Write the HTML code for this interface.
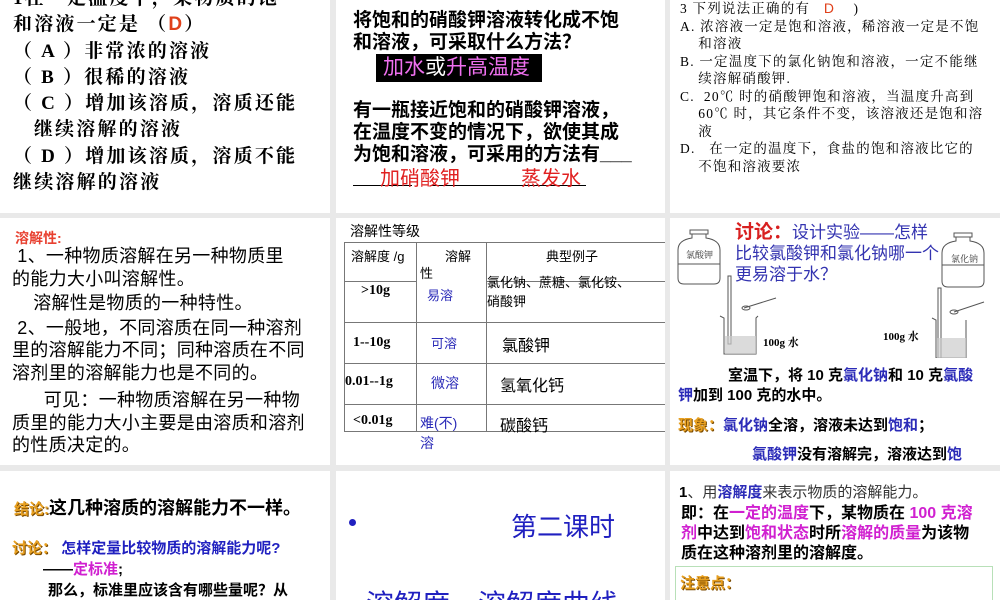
<!DOCTYPE html>
<html><head><meta charset="utf-8"><style>
*{margin:0;padding:0;box-sizing:border-box}
body{width:1000px;height:600px;background:#e9e9e9;position:relative;overflow:hidden;font-family:"Liberation Sans","Noto Sans CJK SC",sans-serif;color:#000}
.p{position:absolute;background:#fff;overflow:hidden}
.t{position:absolute;white-space:nowrap}
.serif{font-family:"Liberation Serif","Noto Serif CJK SC",serif}
.b{font-weight:bold}
.blue{color:#2b2bb8}
.org{color:#e8a020;font-weight:bold;text-shadow:1px 1px 0 #7a4a00}
.mag{color:#d020d0}
</style></head><body>

<!-- Panel 1 -->
<div class="p" style="left:0;top:0;width:330px;height:213px">
<div class="serif b" style="position:absolute;left:13px;top:-14px;font-size:19px;line-height:26.3px;letter-spacing:2.2px;white-space:nowrap">
<div>1在一定温度下，某物质的饱</div>
<div>和溶液一定是 （<span style="color:#e0401a;font-family:'Liberation Sans'">D</span>）</div>
<div>（ A ）非常浓的溶液</div>
<div>（ B ）很稀的溶液</div>
<div>（ C ）增加该溶质，溶质还能</div>
<div>&nbsp;&nbsp;&nbsp;继续溶解的溶液</div>
<div>（ D ）增加该溶质，溶质不能</div>
<div>继续溶解的溶液</div>
</div>
</div>

<!-- Panel 2 -->
<div class="p" style="left:336px;top:0;width:329px;height:213px">
<div class="b" style="position:absolute;left:17px;top:10px;font-size:19px;line-height:22px">
<div>将饱和的硝酸钾溶液转化成不饱</div>
<div>和溶液，可采取什么方法？</div>
</div>
<div style="position:absolute;left:40px;top:54px;width:166px;height:28px;background:#000"></div>
<div class="t" style="left:47px;top:55px;font-size:21px;line-height:26px;color:#f070f0">加水<span style="color:#fff">或</span>升高温度</div>
<div class="b" style="position:absolute;left:17px;top:100px;font-size:19px;line-height:22px">
<div>有一瓶接近饱和的硝酸钾溶液，</div>
<div>在温度不变的情况下，欲使其成</div>
<div>为饱和溶液，可采用的方法有___</div>
</div>
<div style="position:absolute;left:17px;top:185px;width:59px;border-top:1px solid #000"></div>
<div style="position:absolute;left:96px;top:185px;width:154px;border-top:1px solid #000"></div>
<div class="t" style="left:44px;top:162px;font-size:20px;color:#e02020">加硝酸钾</div>
<div class="t" style="left:185px;top:162px;font-size:20px;color:#e02020">蒸发水</div>
</div>

<!-- Panel 3 -->
<div class="p" style="left:670px;top:0;width:330px;height:213px">
<div class="serif" style="position:absolute;left:10px;top:0px;font-size:13.5px;line-height:17.5px;letter-spacing:1.2px;white-space:nowrap">
<div>3 下列说法正确的有 &nbsp;&nbsp;<span style="color:#e0401a;font-family:'Liberation Sans';font-size:14px">D</span> &nbsp;&nbsp;&nbsp;)</div>
<div>A. 浓溶液一定是饱和溶液，稀溶液一定是不饱</div>
<div>&nbsp;&nbsp;&nbsp;&nbsp;和溶液</div>
<div>B. 一定温度下的氯化钠饱和溶液，一定不能继</div>
<div>&nbsp;&nbsp;&nbsp;&nbsp;续溶解硝酸钾.</div>
<div>C. &nbsp;20℃ 时的硝酸钾饱和溶液，当温度升高到</div>
<div>&nbsp;&nbsp;&nbsp;&nbsp;60℃ 时，其它条件不变，该溶液还是饱和溶</div>
<div>&nbsp;&nbsp;&nbsp;&nbsp;液</div>
<div>D. &nbsp;&nbsp;在一定的温度下，食盐的饱和溶液比它的</div>
<div>&nbsp;&nbsp;&nbsp;&nbsp;不饱和溶液要浓</div>
</div>
</div>

<!-- Panel 4 -->
<div class="p" style="left:0;top:218px;width:330px;height:247px">
<div class="t b" style="left:15px;top:10px;font-size:14px;color:#e84030">溶解性:</div>
<div style="position:absolute;left:12px;top:27px;font-size:18px;line-height:22.5px;letter-spacing:0.3px;white-space:nowrap">
<div>&nbsp;1、一种物质溶解在另一种物质里</div>
<div>的能力大小叫溶解性。</div>
<div style="margin-top:2px">&nbsp;&nbsp;&nbsp;&nbsp;溶解性是物质的一种特性。</div>
<div style="margin-top:2px">&nbsp;2、一般地，不同溶质在同一种溶剂</div>
<div>里的溶解能力不同；同种溶质在不同</div>
<div>溶剂里的溶解能力也是不同的。</div>
<div style="margin-top:5px">&nbsp;&nbsp;&nbsp;&nbsp;&nbsp;&nbsp;可见：一种物质溶解在另一种物</div>
<div>质里的能力大小主要是由溶质和溶剂</div>
<div>的性质决定的。</div>
</div>
</div>

<!-- Panel 5 -->
<div class="p" style="left:336px;top:218px;width:329px;height:247px">
<div class="t" style="left:14px;top:3px;font-size:14px">溶解性等级</div>
<div style="position:absolute;left:8px;top:24px;width:321px;height:190px;border:1px solid #777;border-right:none"></div>
<div style="position:absolute;left:80px;top:24px;height:190px;border-left:1px solid #777"></div>
<div style="position:absolute;left:150px;top:24px;height:190px;border-left:1px solid #777"></div>
<div style="position:absolute;left:8px;top:63px;width:72px;border-top:1px solid #777"></div>
<div style="position:absolute;left:150px;top:63px;width:179px;border-top:1px solid #777"></div>
<div style="position:absolute;left:8px;top:104px;width:321px;border-top:1px solid #777"></div>
<div style="position:absolute;left:8px;top:145px;width:321px;border-top:1px solid #777"></div>
<div style="position:absolute;left:8px;top:186px;width:321px;border-top:1px solid #777"></div>
<div class="t" style="left:15px;top:28px;font-size:13px">溶解度 /g</div>
<div class="t" style="left:109px;top:28px;font-size:13px">溶解</div>
<div class="t" style="left:84px;top:45px;font-size:13px">性</div>
<div class="t" style="left:210px;top:28px;font-size:13px">典型例子</div>
<div class="t" style="left:151px;top:55px;font-size:13px;line-height:19px">氯化钠、蔗糖、氯化铵、<br>硝酸钾</div>
<div class="t serif b" style="left:25px;top:65px;font-size:14px">&gt;10g</div>
<div class="t blue" style="left:91px;top:67px;font-size:13px">易溶</div>
<div class="t serif b" style="left:17px;top:117px;font-size:14px">1--10g</div>
<div class="t blue" style="left:95px;top:115px;font-size:13px">可溶</div>
<div class="t" style="left:166px;top:114px;font-size:16px">氯酸钾</div>
<div class="t serif b" style="left:9px;top:156px;font-size:14px">0.01--1g</div>
<div class="t blue" style="left:95px;top:155px;font-size:14px">微溶</div>
<div class="t" style="left:164px;top:154px;font-size:16px">氢氧化钙</div>
<div class="t serif b" style="left:17px;top:195px;font-size:14px">&lt;0.01g</div>
<div class="t blue" style="left:84px;top:195px;font-size:14px;line-height:20px">难(不)<br>溶</div>
<div class="t" style="left:164px;top:194px;font-size:16px">碳酸钙</div>
</div>

<!-- Panel 6 -->
<div class="p" style="left:670px;top:218px;width:330px;height:247px">
<svg style="position:absolute;left:0;top:0" width="330" height="140">
<g fill="none" stroke="#555" stroke-width="1">
<rect x="20" y="12" width="18" height="4"/>
<path d="M22 16 L22 20 Q8 22 8 32 L8 60 Q8 66 14 66 L44 66 Q50 66 50 60 L50 32 Q50 22 36 20 L36 16"/>
<line x1="8" y1="46" x2="50" y2="46"/>
<rect x="284" y="15" width="18" height="4"/>
<path d="M286 19 L286 23 Q272 25 272 35 L272 63 Q272 69 278 69 L308 69 Q314 69 314 63 L314 35 Q314 25 300 23 L300 19"/>
<line x1="272" y1="47" x2="314" y2="47"/>
<rect x="58" y="58" width="3" height="68"/>
<line x1="74" y1="90" x2="106" y2="80"/><ellipse cx="76" cy="90" rx="4" ry="2"/>
<path d="M50 98 L54 100 L54 136 L86 136 L86 100 L88 98"/>
<rect x="268" y="70" width="3" height="70"/>
<line x1="284" y1="94" x2="314" y2="84"/><ellipse cx="284" cy="94" rx="4" ry="2"/>
<path d="M262 100 L266 102 L266 140 L296 140 L296 102"/>
</g>
<rect x="55" y="118" width="31" height="18" fill="#ccc" opacity=".7"/>
<rect x="267" y="120" width="29" height="20" fill="#ccc" opacity=".7"/>
<text x="16" y="40" font-size="9" font-family="Noto Serif CJK SC,serif" fill="#333">氯酸钾</text>
<text x="281" y="44" font-size="9" font-family="Noto Serif CJK SC,serif" fill="#333">氯化钠</text>
<text x="93" y="128" font-size="11" font-weight="bold" font-family="Liberation Serif,Noto Serif CJK SC,serif">100g 水</text>
<text x="213" y="122" font-size="11" font-weight="bold" font-family="Liberation Serif,Noto Serif CJK SC,serif">100g 水</text>
</svg>
<div class="t" style="left:65px;top:4px;font-size:17px;line-height:21px;color:#3333b0"><span style="color:#d82020;font-size:19px;font-weight:bold">讨论：</span>设计实验——怎样<br>比较氯酸钾和氯化钠哪一个<br>更易溶于水？</div>
<div class="b" style="position:absolute;left:8px;top:148px;font-size:15px;line-height:20px;white-space:nowrap">
<div>&nbsp;&nbsp;&nbsp;&nbsp;&nbsp;&nbsp;&nbsp;&nbsp;&nbsp;&nbsp;&nbsp;&nbsp;室温下，将 10 克<span class="blue">氯化钠</span>和 10 克<span class="blue">氯酸</span></div>
<div><span class="blue">钾</span>加到 100 克的水中。</div>
<div style="margin-top:10px"><span class="org">现象：</span><span class="blue">氯化钠</span>全溶，溶液未达到<span class="blue">饱和</span>；</div>
<div style="margin-top:9px;padding-left:74px"><span class="blue">氯酸钾</span>没有溶解完，溶液达到<span class="blue">饱</span></div>
</div>
</div>

<!-- Panel 7 -->
<div class="p" style="left:0;top:471px;width:330px;height:129px">
<div class="t b" style="left:14px;top:23px;font-size:18px"><span class="org" style="font-size:15px">结论:</span>这几种溶质的溶解能力不一样。</div>
<div class="t b" style="left:12px;top:66px;font-size:15px"><span class="org">讨论：</span> <span style="color:#2020c0">怎样定量比较物质的溶解能力呢?</span></div>
<div class="t b" style="left:43px;top:87px;font-size:15px">——<span class="mag">定标准</span>;</div>
<div class="t b" style="left:48px;top:108px;font-size:15px">那么，标准里应该含有哪些量呢？从</div>
</div>

<!-- Panel 8 -->
<div class="p" style="left:336px;top:471px;width:329px;height:129px">
<div style="position:absolute;left:13px;top:48px;width:7px;height:7px;border-radius:50%;background:#2020c0"></div>
<div class="t" style="left:175px;top:36px;font-size:26px;color:#2020c0">第二课时</div>
<div class="t" style="left:30px;top:112px;font-size:28px;color:#2020c0">溶解度、溶解度曲线</div>
</div>

<!-- Panel 9 -->
<div class="p" style="left:670px;top:471px;width:330px;height:129px">
<div class="t" style="left:9px;top:10px;font-size:15px;color:#333"><b style="color:#000">1</b>、用<b class="blue">溶解度</b>来表示物质的溶解能力。</div>
<div class="b" style="position:absolute;left:11px;top:33px;font-size:16px;line-height:20px;white-space:nowrap">
<div>即：在<span class="mag">一定的温度</span>下，某物质在 <span class="mag">100 克溶</span></div>
<div><span class="mag">剂</span>中达到<span class="mag">饱和状态</span>时所<span class="mag">溶解的质量</span>为该物</div>
<div>质在这种溶剂里的溶解度。</div>
</div>
<div style="position:absolute;left:5px;top:95px;width:318px;height:40px;border:1px solid #b8e0b8"></div>
<div class="t org" style="left:10px;top:101px;font-size:15px">注意点：</div>
</div>

</body></html>
